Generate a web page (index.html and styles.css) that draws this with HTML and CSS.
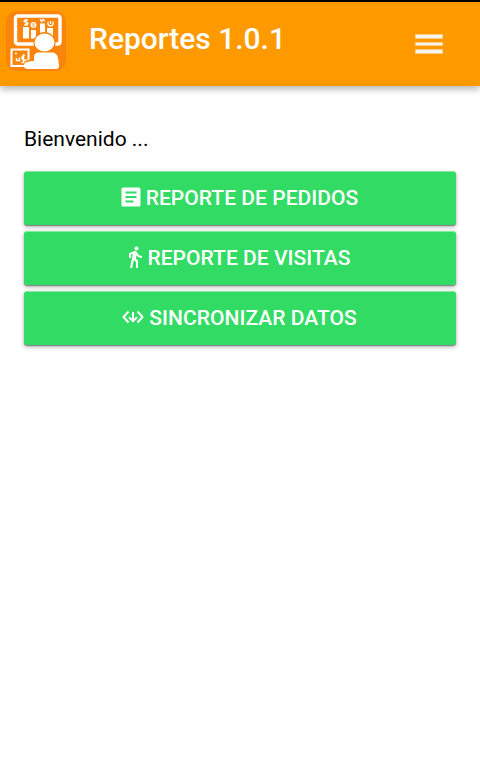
FILE: index.html
```html
<!DOCTYPE html>
<html lang="es">
<head>
<meta charset="utf-8">
<title>Reportes</title>
<link rel="stylesheet" href="styles.css">
</head>

<body>

  <header class="toolbar">
    <svg class="logo" viewBox="0 0 60 60">
      <rect class="logo-bg" width="60" height="60" rx="11" />
      <!-- board with the chart -->
      <path class="logo-line" stroke-width="3.4" d="M30 33H12Q9.500 33 9.500 30.500V7.500Q9.500 5 12 5H51.500Q54 5 54 7.500V30.500Q54 33 51.500 33H48" />
      <path class="logo-fill" d="M17 16h6v11.500h-6zM25 19h5v8.500h-5zM34 12.500h5V24h-5zM41 17h6v11h-6z" />
      <path class="logo-line" stroke-width="1.300" d="M22 9.200h-3.200l-.8 1.300 4 1.700-.8 1.600H18M20 8v6.800M34 8l1.500 2.500L37 8.500l2 1.500M42 10.500q-.5 4.500 2.500 4.500t2.500-4.500M44.500 10v3" />
      <circle class="logo-line" stroke-width="1.300" cx="27.500" cy="14" r="2.300" />
      <path class="logo-line" stroke-width="1.300" d="M26 14h3" />
      <!-- small screen -->
      <rect class="logo-line" stroke-width="2" x="5.500" y="38.500" width="17" height="16.500" />
      <path class="logo-line" stroke-width="1.400" d="M9 42.500h2M10.500 47v2.500h3v-3M19 44.500q-3-.5-3 2t3 2.500 0 2.500h-3.500M17.500 43v8" />
      <!-- person -->
      <path class="logo-gap" d="M26 59Q17 57 19 52.500Q20 49 28 49.500V46Q28 41 33 41H47Q53 41 53.500 50V59Z" />
      <circle class="logo-gap" cx="38.500" cy="32" r="10" />
      <path class="logo-fill" d="M21 58Q17 57 18 53.500Q19 50 28 50V46Q28 41.500 33 41.500H46Q51 41.500 52 47L53 54Q53.500 58 50 58Z" />
      <ellipse class="logo-fill" cx="38.500" cy="31.500" rx="10" ry="9" />
    </svg>
    <h1 class="title">Reportes 1.0.1</h1>
    <div class="menu">
      <span class="menu-line"></span>
      <span class="menu-line menu-line-thin"></span>
      <span class="menu-line"></span>
    </div>
  </header>

  <main class="content">
    <p class="welcome">Bienvenido ...</p>

    <button class="button">
      <svg class="icon icon-paper" viewBox="0 0 20 20">
        <path fill="currentColor" fill-rule="evenodd" d="M2 .5h16Q19.500.5 19.500 2v16q0 1.500-1.500 1.500H2Q.5 19.500.5 18V2Q.5.5 2 .5zM4.500 4.500v2h11v-2zM4.500 9v2h11V9zM4.500 13.500v2h8v-2z" />
      </svg>
      <span>REPORTE DE PEDIDOS</span>
    </button>

    <button class="button">
      <svg class="icon icon-walk" viewBox="0 0 24 24">
        <path fill="currentColor" d="M13.500 5.500c1.100 0 2-.9 2-2s-.9-2-2-2-2 .9-2 2 .9 2 2 2zM9.800 8.900L7 23h2.100l1.800-8 2.100 2v6h2v-7.500l-2.100-2 .6-3C14.800 12 16.800 13 19 13v-2c-1.900 0-3.500-1-4.300-2.400l-1-1.600c-.4-.6-1-1-1.700-1-.3 0-.5.1-.8.1L6 8.300V13h2V9.600l1.800-.7" />
      </svg>
      <span>REPORTE DE VISITAS</span>
    </button>

    <button class="button">
      <svg class="icon icon-sync" viewBox="0 0 22 14">
        <path fill="none" stroke="currentColor" stroke-width="2" d="M6.500 1.500L1.500 7l5 5.500M15.500 1.500l5 5.500-5 5.500M11 2v9M7 7.200l4 4 4-4" />
      </svg>
      <span>SINCRONIZAR DATOS</span>
    </button>
  </main>

</body>
</html>
```

FILE: styles.css
```css
body {
  margin: 0;
  background-color: #fff;
  font-family: Roboto, sans-serif;
  font-size: 21px;
  color: #000;
}

.toolbar {
  display: flex;
  align-items: flex-start;
  box-sizing: border-box;
  height: 86px;
  padding: 9px 37px 0 6px;
  border-top: 2px solid #000;
  background-color: #ff9900;
  box-shadow: 0 3px 7px rgba(0, 0, 0, .3);
}

.logo {
  width: 60px;
  height: 60px;
}

.logo-bg {
  fill: #fb840c;
}

.logo-fill {
  fill: #fff;
}

.logo-line {
  fill: none;
  stroke: #fff;
}

.logo-gap {
  fill: #fb840c;
  stroke: #fb840c;
  stroke-width: 2;
}

.title {
  flex: 1;
  margin: 10px 0 0 23px;
  font-size: 30px;
  line-height: 36px;
  font-weight: 500;
  color: #fff;
}

.menu {
  display: flex;
  flex-direction: column;
  gap: 3px;
  margin-top: 23px;
}

.menu-line {
  width: 26px;
  height: 3px;
  border: 1px solid #ffcc80;
  background-color: #f4f4f4;
}

.menu-line-thin {
  height: 2px;
}

.content {
  display: flex;
  flex-direction: column;
  gap: 6px;
  padding: 38px 24px 10px;
}

.welcome {
  margin: 0 0 11px;
  line-height: 30px;
}

.button {
  display: flex;
  align-items: center;
  justify-content: center;
  height: 54px;
  padding: 0 1px 1px 0;
  border: 0;
  border-top: 1px solid #84e9a2;
  border-radius: 3px;
  background-color: #32db64;
  box-shadow: 0 1px 1px rgba(0, 0, 0, .35), 0 2px 4px rgba(0, 0, 0, .3);
  font-family: inherit;
  font-size: 21px;
  font-weight: 500;
  letter-spacing: .04px;
  color: #fff;
}

.icon {
  margin-bottom: 2px;
}

.icon-paper {
  width: 20px;
  height: 20px;
  margin-right: 5px;
}

.icon-walk {
  width: 24px;
  height: 24px;
  margin-left: -5px;
}

.icon-sync {
  width: 22px;
  height: 14px;
  margin-right: 5px;
}
```
